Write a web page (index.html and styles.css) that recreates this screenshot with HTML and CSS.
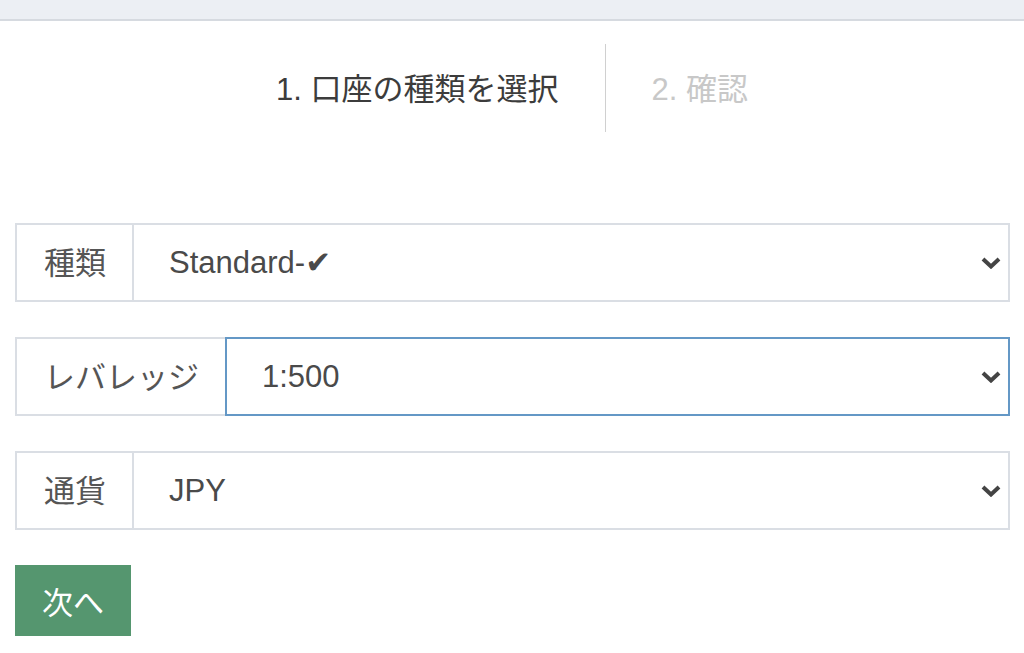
FILE: index.html
```html
<!DOCTYPE html>
<html lang="ja">
<head>
    <meta charset="UTF-8">
    <meta name="viewport" content="width=device-width, initial-scale=1.0">
    <title>口座の種類を選択</title>
    <link rel="stylesheet" href="styles.css">
</head>
<body>
    <div class="topbar"></div>

    <div class="steps">
        <div class="step active">1. 口座の種類を選択</div>
        <div class="step">2. 確認</div>
    </div>

    <form class="account-form">
        <div class="field">
            <label class="field-label" for="type">種類</label>
            <div class="select-wrap">
                <select id="type" class="field-select">
                    <option>Standard-✔</option>
                    <option>Micro</option>
                    <option>ECN</option>
                </select>
                <svg class="chevron" width="20" height="12" viewBox="0 0 20 12"><path d="M2 2 L10 9.5 L18 2" fill="none" stroke="#444" stroke-width="4"/></svg>
            </div>
        </div>

        <div class="field">
            <label class="field-label" for="leverage">レバレッジ</label>
            <div class="select-wrap">
                <select id="leverage" class="field-select focused">
                    <option>1:500</option>
                    <option>1:200</option>
                    <option>1:100</option>
                </select>
                <svg class="chevron" width="20" height="12" viewBox="0 0 20 12"><path d="M2 2 L10 9.5 L18 2" fill="none" stroke="#444" stroke-width="4"/></svg>
            </div>
        </div>

        <div class="field">
            <label class="field-label" for="currency">通貨</label>
            <div class="select-wrap">
                <select id="currency" class="field-select">
                    <option>JPY</option>
                    <option>USD</option>
                    <option>EUR</option>
                </select>
                <svg class="chevron" width="20" height="12" viewBox="0 0 20 12"><path d="M2 2 L10 9.5 L18 2" fill="none" stroke="#444" stroke-width="4"/></svg>
            </div>
        </div>

        <button type="button" class="next-button">次へ</button>
    </form>
</body>
</html>
```

FILE: styles.css
```css
body {
    margin: 0;
    padding: 0;
    background: #ffffff;
    font-family: 'Liberation Sans', 'Noto Sans CJK JP', sans-serif;
    color: #555555;
}
.topbar {
    height: 19px;
    background-color: #eceff4;
    border-bottom: 2px solid #d6dae0;
}
.steps {
    display: flex;
    justify-content: center;
    margin-top: 23px;
}
.step {
    height: 88px;
    display: flex;
    align-items: center;
    padding: 0 46px 3px;
    box-sizing: border-box;
    font-size: 31px;
    color: #c8c8c8;
}
.step.active {
    color: #3c3c3c;
}
.step + .step {
    border-left: 1px solid #d0d0d0;
}
.account-form {
    margin-top: 91px;
    padding: 0 14px 0 15px;
}
.field {
    display: flex;
    height: 79px;
    margin-bottom: 35px;
}
.field-label {
    display: flex;
    align-items: center;
    padding: 0 26px 5px 27px;
    border: 2px solid #dadee4;
    border-right: none;
    font-size: 31px;
    color: #555555;
}
.select-wrap {
    position: relative;
    flex: 1;
    display: flex;
}
.field-select {
    flex: 1;
    appearance: none;
    -webkit-appearance: none;
    margin: 0;
    border: 2px solid #dadee4;
    border-radius: 0;
    background: #ffffff;
    padding: 0 40px 0 35px;
    font-family: 'Liberation Sans', 'DejaVu Sans', 'Noto Sans CJK JP', sans-serif;
    font-size: 31px;
    color: #4a4a4a;
    outline: none;
}
.field-select.focused {
    border-color: #6498c6;
}
.chevron {
    position: absolute;
    right: 9px;
    top: 34px;
    pointer-events: none;
}
.next-button {
    font-family: 'Liberation Sans', 'Noto Sans CJK JP', sans-serif;
    font-size: 31px;
    color: #ffffff;
    background-color: #55966f;
    border: none;
    border-radius: 0;
    height: 71px;
    padding: 0 27px;
    cursor: pointer;
}
```
